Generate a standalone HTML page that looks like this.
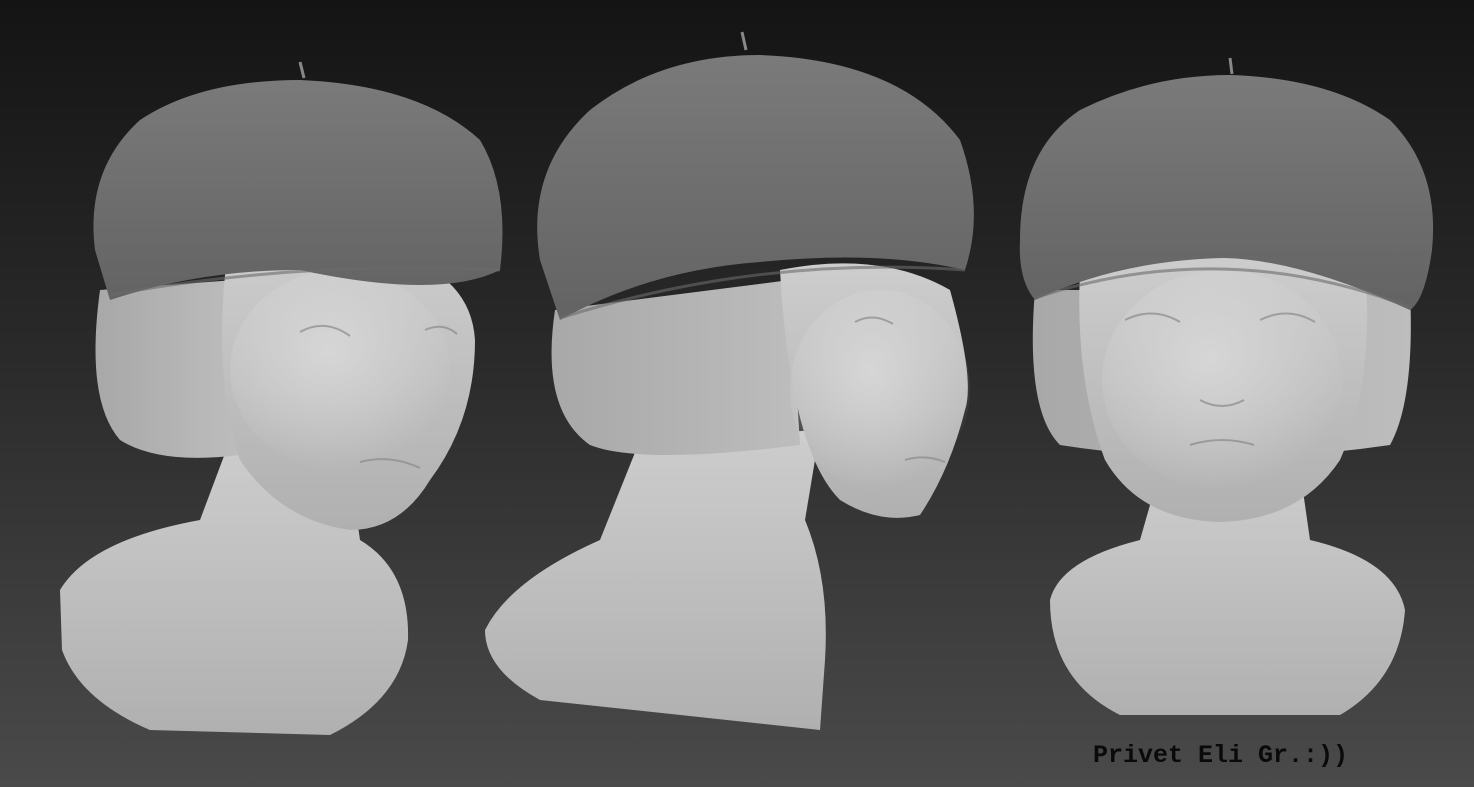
<!DOCTYPE html>
<html><head><meta charset="utf-8"><style>
html,body{margin:0;padding:0;width:1474px;height:787px;overflow:hidden}
body{background:linear-gradient(#141414 0%,#2a2a2a 45%,#4a4a4a 100%);position:relative}
svg{position:absolute;left:0;top:0}
.t{position:absolute;left:1093px;top:741px;font:bold 25px "Liberation Mono",monospace;color:#0a0a0a}
</style></head><body>
<svg width="1474" height="787" viewBox="0 0 1474 787">
<defs>
<linearGradient id="skin" x1="0" y1="0" x2="0" y2="1"><stop offset="0" stop-color="#cdcdcd"/><stop offset="1" stop-color="#b0b0b0"/></linearGradient>
<linearGradient id="beret" x1="0" y1="0" x2="0" y2="1"><stop offset="0" stop-color="#7a7a7a"/><stop offset="1" stop-color="#636363"/></linearGradient>
<linearGradient id="hair" x1="0" y1="0" x2="1" y2="0"><stop offset="0" stop-color="#a8a8a8"/><stop offset="1" stop-color="#bdbdbd"/></linearGradient>
<radialGradient id="hl" cx="0.45" cy="0.4" r="0.6"><stop offset="0" stop-color="#d6d6d6"/><stop offset="1" stop-color="#d6d6d6" stop-opacity="0"/></radialGradient>
</defs>
<!-- bust 1 -->
<path d="M60 590 Q90 540 200 520 L230 440 L350 470 L360 540 Q410 570 408 640 Q400 700 330 735 L150 730 Q80 700 62 650 Z" fill="url(#skin)"/>
<path d="M100 290 Q85 400 120 440 Q160 465 240 455 L235 280 Z" fill="url(#hair)"/>
<path d="M225 275 Q230 230 350 245 Q470 260 475 340 Q475 420 430 480 Q400 530 350 530 Q280 520 240 460 Q215 380 225 275 Z" fill="url(#skin)"/>
<ellipse cx="340" cy="370" rx="110" ry="100" fill="url(#hl)"/>
<path d="M95 250 Q85 170 140 120 Q200 80 300 80 Q420 85 480 140 Q510 190 500 270 Q440 300 300 270 Q200 270 110 300 Z" fill="url(#beret)"/>
<path d="M300 62 l4 16" stroke="#888" stroke-width="3"/>
<!-- bust 2 -->
<path d="M485 630 Q510 580 600 540 L640 440 L820 430 L805 520 Q830 580 825 660 L820 730 L540 700 Q485 670 485 630 Z" fill="url(#skin)"/>
<path d="M555 310 Q540 410 590 445 Q640 465 800 445 L790 280 Z" fill="url(#hair)"/>
<path d="M780 270 Q880 250 950 290 Q975 380 965 410 Q950 470 920 515 Q880 525 840 500 Q790 450 780 270 Z" fill="url(#skin)"/>
<ellipse cx="880" cy="390" rx="90" ry="100" fill="url(#hl)"/>
<path d="M540 260 Q525 170 590 110 Q660 55 760 55 Q900 60 960 140 Q985 210 965 270 Q880 250 760 262 Q650 270 560 320 Z" fill="url(#beret)"/>
<path d="M742 32 l4 18" stroke="#888" stroke-width="3"/>
<!-- bust 3 -->
<path d="M1050 600 Q1060 560 1140 540 L1160 470 L1300 470 L1310 540 Q1395 560 1405 610 Q1400 680 1340 715 L1120 715 Q1050 680 1050 600 Z" fill="url(#skin)"/>
<path d="M1035 290 Q1025 410 1060 445 Q1220 470 1390 445 Q1415 400 1410 290 Z" fill="url(#hair)"/>
<path d="M1080 270 Q1220 235 1365 270 Q1375 380 1340 460 Q1300 520 1220 522 Q1140 520 1105 460 Q1075 380 1080 270 Z" fill="url(#skin)"/>
<ellipse cx="1222" cy="380" rx="120" ry="110" fill="url(#hl)"/>
<path d="M1020 240 Q1020 150 1080 110 Q1150 75 1230 75 Q1330 78 1390 120 Q1440 170 1432 250 Q1425 300 1410 310 Q1300 260 1225 258 Q1120 260 1035 300 Q1018 280 1020 240 Z" fill="url(#beret)"/>
<path d="M1230 58 l2 16" stroke="#888" stroke-width="3"/>
<!-- facial hints -->
<g fill="none" stroke="#8a8a8a" stroke-width="2" opacity="0.7">
<path d="M300 332 q25 -14 50 4"/><path d="M425 330 q18 -8 32 4"/><path d="M360 462 q30 -8 60 6"/>
<path d="M855 322 q18 -10 38 2"/><path d="M905 460 q20 -6 40 2"/>
<path d="M1125 320 q28 -14 55 2"/><path d="M1260 320 q28 -14 55 2"/><path d="M1190 445 q32 -10 64 0"/><path d="M1200 400 q22 12 44 0"/>
</g>
<g fill="none" stroke="#6a6a6a" stroke-width="3" opacity="0.6">
<path d="M110 295 Q300 260 500 270"/><path d="M560 318 Q760 255 965 270"/><path d="M1035 298 Q1225 235 1412 308"/>
</g>
</svg>
<div class="t">Privet Eli Gr.:))</div>
</body></html>
